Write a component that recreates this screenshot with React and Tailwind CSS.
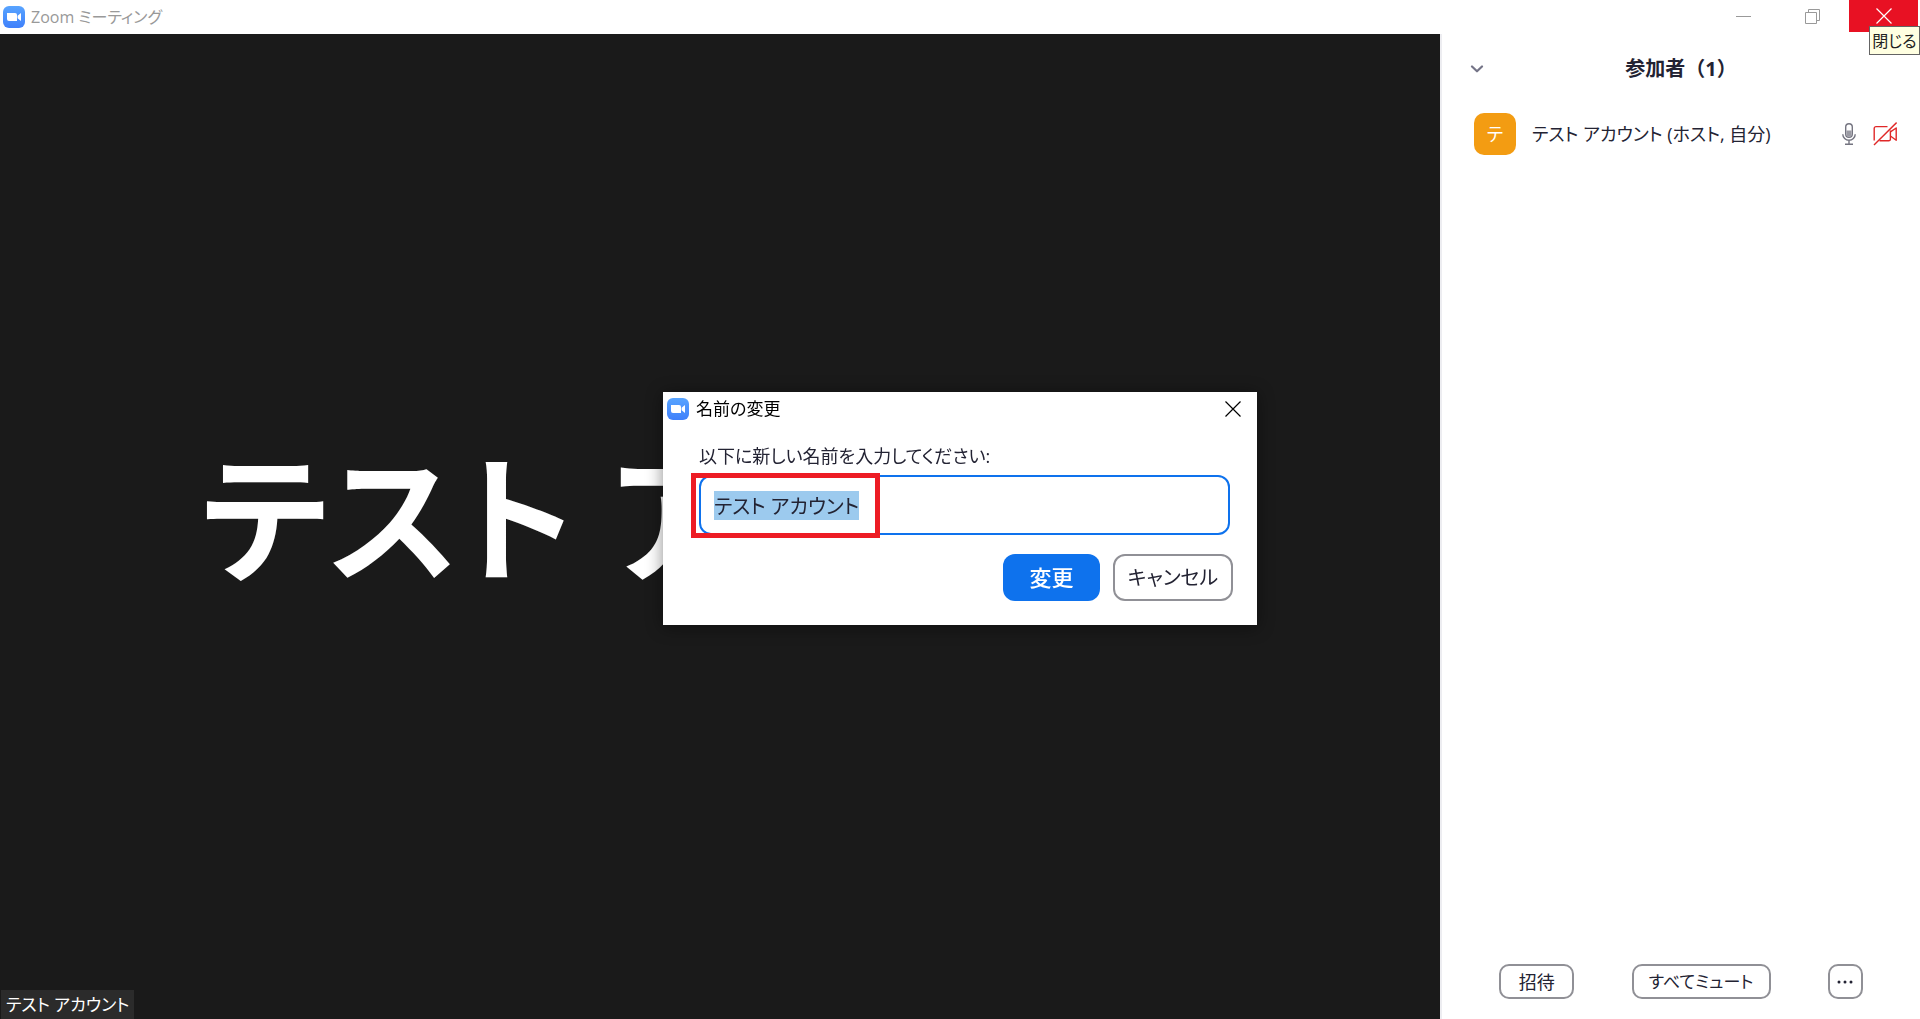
import { useEffect, useRef, useState } from "react"

const USER_NAME = "テスト アカウント"

function ZoomLogo() {
  return (
    <svg viewBox="0 0 22 22" className="w-[22px] h-[22px] shrink-0" aria-hidden="true">
      <defs>
        <linearGradient id="zoomBlue" x1="0" y1="0" x2="0" y2="1">
          <stop offset="0" stopColor="#58a4ff" />
          <stop offset="1" stopColor="#3f80fb" />
        </linearGradient>
      </defs>
      <rect width="22" height="22" rx="6" fill="url(#zoomBlue)" />
      <path d="M4 7h8a2 2 0 0 1 2 2v6H6a2 2 0 0 1-2-2z" fill="#fff" />
      <path d="M14.6 9.8 18 7v8l-3.4-2.8z" fill="#fff" />
    </svg>
  )
}

function CloseIcon() {
  return (
    <svg viewBox="0 0 16 16" className="w-4 h-4" fill="none" stroke="currentColor" strokeWidth="1.2" aria-hidden="true">
      <path d="M.5.5l15 15M15.5.5l-15 15" />
    </svg>
  )
}

function MicIcon() {
  return (
    <svg viewBox="0 0 14 22" className="w-[14px] h-[22px]" fill="none" stroke="#747480" strokeWidth="1.4" aria-hidden="true">
      <path d="M4.6 7.6h4.8v3.6a2.4 2.4 0 0 1-4.8 0z" fill="#9a9aa3" stroke="none" />
      <rect x="3.7" y="0.7" width="6.6" height="13.6" rx="3.3" />
      <path d="M.8 11.3a6.2 6 0 0 0 12.4 0M7 17.4v3.8M3 21.2h8" />
    </svg>
  )
}

function CameraOffIcon() {
  return (
    <svg viewBox="0 0 24 24" className="w-6 h-6" fill="none" stroke="#e02828" strokeWidth="1.4" strokeLinejoin="round" aria-hidden="true">
      <path d="M1.2 18.5V6.4a1.8 1.8 0 0 1 1.8-1.8h11.5M6.5 18.8h9.3a1.6 1.6 0 0 0 1.6-1.6V8.5" />
      <path d="M17.4 9.8 23.2 6v12.2l-5.8-4.2" />
      <path d="M1 23 23.6.6" />
    </svg>
  )
}

function TitleBar() {
  return (
    <header className="flex h-[34px] shrink-0 bg-white text-[#999999]">
      <div className="flex items-center gap-1.5 pl-[3px] text-base">
        <ZoomLogo />
        <span>Zoom ミーティング</span>
      </div>
      <div className="relative ml-auto mr-0.5 flex h-8">
        <button aria-label="最小化" className="flex w-[69px] items-center justify-center">
          <span className="w-[15px] h-px bg-[#999999]" />
        </button>
        <button aria-label="元に戻す" className="mr-0.5 flex w-[69px] items-center justify-center">
          <svg viewBox="0 0 15 15" className="w-[15px] h-[15px]" fill="none" stroke="currentColor" aria-hidden="true">
            <path d="M.5 3.5h11v11H.5zM3.5 3.5v-3h11v11h-3" />
          </svg>
        </button>
        <button aria-label="閉じる" className="flex w-[69px] items-center justify-center bg-[#e81123] text-white">
          <CloseIcon />
        </button>
        <div role="tooltip" className="absolute -right-0.5 top-[26px] z-10 flex h-[29px] w-[51px] items-center justify-center border border-[#646464] bg-[#ffffe1] text-base whitespace-nowrap text-[#222222]">
          閉じる
        </div>
      </div>
    </header>
  )
}

function VideoPane() {
  return (
    <main className="relative flex flex-1 items-center justify-center overflow-hidden bg-[#1a1a1a] pb-5 text-white">
      <h1 className="text-[138px] leading-none font-bold whitespace-nowrap">{USER_NAME}</h1>
      <div className="absolute bottom-0 left-px flex h-[29px] items-center bg-[#2b2b2b] px-[5px] text-[17px]">
        {USER_NAME}
      </div>
    </main>
  )
}

function ParticipantsPanel() {
  return (
    <aside className="flex w-1/4 flex-col border-l-2 border-[#ededf1] bg-white text-[#232333]">
      <div className="relative flex h-[70px] items-center justify-center">
        <button aria-label="折りたたむ" className="absolute left-7 flex h-6 w-4 items-center">
          <svg viewBox="0 0 14 8" className="w-[14px] h-2" fill="none" stroke="#747487" strokeWidth="2.2" strokeLinecap="round" strokeLinejoin="round" aria-hidden="true">
            <path d="M2 1.5 7 6.3 12 1.5" />
          </svg>
        </button>
        <h2 className="text-xl font-bold [font-feature-settings:normal]">参加者（1）</h2>
      </div>
      <ul className="flex-1">
        <li className="flex h-[60px] items-center pl-8 pr-[23px]">
          <span className="flex h-[42px] w-[42px] items-center justify-center rounded-[10px] bg-[#f39c12] text-lg text-white">
            テ
          </span>
          <span className="ml-4 flex-1 text-lg">{USER_NAME} (ホスト, 自分)</span>
          <MicIcon />
          <span className="ml-[17px]"><CameraOffIcon /></span>
        </li>
      </ul>
      <div className="mb-5 flex justify-evenly">
        <button className="h-[35px] w-[75px] rounded-[10px] border-2 border-[#909096] text-lg">招待</button>
        <button className="h-[35px] w-[139px] rounded-[10px] border-2 border-[#909096] text-[17px]">すべてミュート</button>
        <button aria-label="その他" className="flex h-[35px] w-[35px] items-center justify-center rounded-[10px] border-2 border-[#909096]">
          <svg viewBox="0 0 16 4" className="w-4 h-1" fill="#232333" aria-hidden="true">
            <circle cx="2" cy="2" r="1.5" />
            <circle cx="8" cy="2" r="1.5" />
            <circle cx="14" cy="2" r="1.5" />
          </svg>
        </button>
      </div>
    </aside>
  )
}

function RenameDialog() {
  const [name, setName] = useState(USER_NAME)
  const inputRef = useRef(null)

  useEffect(() => {
    inputRef.current.focus()
    inputRef.current.select()
  }, [])

  return (
    <div className="fixed inset-0 flex items-center justify-center pb-0.5">
      <form
        role="dialog"
        aria-labelledby="rename-title"
        onSubmit={(e) => e.preventDefault()}
        className="w-[594px] bg-white pb-6 text-[#232333] shadow-[0_2px_16px_rgba(0,0,0,0.45)]"
      >
        <div className="flex h-[34px] items-center pl-1 pr-4 text-black">
          <ZoomLogo />
          <span id="rename-title" className="ml-[7px] flex-1 text-[17px]">名前の変更</span>
          <button type="button" aria-label="閉じる">
            <CloseIcon />
          </button>
        </div>
        <div className="mt-4 pl-9 pr-[27px]">
          <label htmlFor="name" className="block h-[33px] text-lg">以下に新しい名前を入力してください:</label>
          <div className="relative">
            <input
              id="name"
              ref={inputRef}
              value={name}
              onChange={(e) => setName(e.target.value)}
              className="h-[60px] w-full rounded-xl border-2 border-[#0e72ed] px-[13px] text-xl outline-none selection:bg-[#9ccaee] selection:text-[#232333]"
            />
            <div className="pointer-events-none absolute -top-0.5 -left-2 h-[65px] w-[189px] border-[5px] border-[#ed1c24]" />
          </div>
        </div>
        <div className="mt-[19px] flex justify-end gap-[13px] pr-6">
          <button type="submit" className="h-[47px] w-[97px] rounded-xl bg-[#0e72ed] text-[22px] font-medium text-white">変更</button>
          <button type="button" className="h-[47px] w-[120px] rounded-xl border-2 border-[#909096] text-xl">キャンセル</button>
        </div>
      </form>
    </div>
  )
}

export default function App() {
  return (
    <div className="flex h-screen flex-col overflow-hidden font-['Open_Sans','Noto_Sans_CJK_JP',sans-serif] [font-feature-settings:'palt']">
      <TitleBar />
      <div className="flex min-h-0 flex-1">
        <VideoPane />
        <ParticipantsPanel />
      </div>
      <RenameDialog />
    </div>
  )
}
